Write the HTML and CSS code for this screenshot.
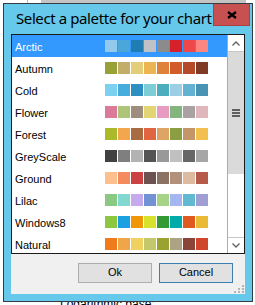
FILE: index.html
```html
<!DOCTYPE html>
<html lang="en">
<head>
  <meta charset="UTF-8">
  <title>Select a palette</title>
  <link rel="stylesheet" href="styles.css">
</head>
<body>
  <div class="desk">
    <!-- Dialog window -->
    <div class="window">
      <div class="titlebar">
        <span class="title">Select a palette for your chart</span>
        <button class="close" aria-label="Close">
          <svg width="10" height="8" viewBox="0 0 10 8"><path d="M1 1 L9 7 M9 1 L1 7" stroke="#000" stroke-width="2.2" fill="none"/></svg>
        </button>
      </div>

      <div class="client">
        <div class="listbox">
          <ul class="list">
            <li class="row selected"><span class="name">Arctic</span><span class="swatches"><i style="background:#94c9ee"></i><i style="background:#4ba7d9"></i><i style="background:#1f7db4"></i><i style="background:#c0c1c6"></i><i style="background:#8b8b8b"></i><i style="background:#d6202a"></i><i style="background:#f0474b"></i><i style="background:#fd8680"></i></span></li>
            <li class="row"><span class="name">Autumn</span><span class="swatches"><i style="background:#98a136"></i><i style="background:#c2ae6a"></i><i style="background:#e4cd78"></i><i style="background:#edb452"></i><i style="background:#df8138"></i><i style="background:#d45c2a"></i><i style="background:#b54a28"></i><i style="background:#7f3b25"></i></span></li>
            <li class="row"><span class="name">Cold</span><span class="swatches"><i style="background:#7dd1f0"></i><i style="background:#47addd"></i><i style="background:#2d8fc2"></i><i style="background:#7dcdd6"></i><i style="background:#4badbd"></i><i style="background:#9ccfe6"></i><i style="background:#63b2d4"></i><i style="background:#4994b4"></i></span></li>
            <li class="row"><span class="name">Flower</span><span class="swatches"><i style="background:#dc7a9a"></i><i style="background:#adc479"></i><i style="background:#a08e7c"></i><i style="background:#e2d574"></i><i style="background:#e79bc1"></i><i style="background:#85b57e"></i><i style="background:#aaa2a2"></i><i style="background:#e0b6bd"></i></span></li>
            <li class="row"><span class="name">Forest</span><span class="swatches"><i style="background:#abba2a"></i><i style="background:#f2a64e"></i><i style="background:#a96b42"></i><i style="background:#e06642"></i><i style="background:#dea466"></i><i style="background:#8b9f42"></i><i style="background:#c29668"></i><i style="background:#f1c04f"></i></span></li>
            <li class="row"><span class="name">GreyScale</span><span class="swatches"><i style="background:#414141"></i><i style="background:#7f7f7f"></i><i style="background:#b3b3b3"></i><i style="background:#545454"></i><i style="background:#999999"></i><i style="background:#c0c0c0"></i><i style="background:#666666"></i><i style="background:#a6a6a6"></i></span></li>
            <li class="row"><span class="name">Ground</span><span class="swatches"><i style="background:#fdbf8c"></i><i style="background:#f48b5e"></i><i style="background:#cc4242"></i><i style="background:#6c5250"></i><i style="background:#8c7262"></i><i style="background:#b2917a"></i><i style="background:#dcbba0"></i><i style="background:#b65a4a"></i></span></li>
            <li class="row"><span class="name">Lilac</span><span class="swatches"><i style="background:#8ac982"></i><i style="background:#82d8d0"></i><i style="background:#c5abee"></i><i style="background:#7193d6"></i><i style="background:#a5d486"></i><i style="background:#a5b6f0"></i><i style="background:#62b9d2"></i><i style="background:#a09fd4"></i></span></li>
            <li class="row"><span class="name">Windows8</span><span class="swatches"><i style="background:#8dc63f"></i><i style="background:#1ba1e2"></i><i style="background:#f09609"></i><i style="background:#d8e12c"></i><i style="background:#339933"></i><i style="background:#00aba9"></i><i style="background:#e05a20"></i><i style="background:#e9bb35"></i></span></li>
            <li class="row"><span class="name">Natural</span><span class="swatches"><i style="background:#ef7b1a"></i><i style="background:#f0a54a"></i><i style="background:#eed161"></i><i style="background:#c4c86a"></i><i style="background:#9aa232"></i><i style="background:#aca384"></i><i style="background:#8a4538"></i><i style="background:#d0462c"></i></span></li>
          </ul>

          <!-- Vertical scrollbar -->
          <div class="scrollbar">
            <div class="sb-btn up">
              <svg width="16" height="16" viewBox="0 0 16 16"><path d="M4.5 10.5 L8 7 L11.5 10.5" stroke="#606060" stroke-width="1.3" fill="none"/></svg>
            </div>
            <div class="thumb"><span class="grip"></span></div>
            <div class="track"></div>
            <div class="sb-btn down">
              <svg width="16" height="15" viewBox="0 0 16 15"><path d="M4.5 5.5 L8 9 L11.5 5.5" stroke="#606060" stroke-width="1.3" fill="none"/></svg>
            </div>
          </div>
        </div>

        <div class="buttons">
          <button class="btn">Ok</button>
          <button class="btn default">Cancel</button>
        </div>

        <svg class="size-grip" width="10" height="8" viewBox="0 0 10 8">
          <rect x="8" y="0" width="2" height="2" fill="#b4b4b4"/>
          <rect x="4" y="3" width="2" height="2" fill="#b4b4b4"/>
          <rect x="8" y="3" width="2" height="2" fill="#b4b4b4"/>
          <rect x="0" y="6" width="2" height="2" fill="#b4b4b4"/>
          <rect x="4" y="6" width="2" height="2" fill="#b4b4b4"/>
          <rect x="8" y="6" width="2" height="2" fill="#b4b4b4"/>
        </svg>
      </div>
    </div>

    <!-- form underneath the dialog -->
    <div class="behind"><span>Logarithmic base:</span></div>
  </div>
</body>
</html>
```

FILE: styles.css
```css
body {
  margin: 0;
  font-family: "Liberation Sans", Arial, sans-serif;
}

.desk {
  width: 255px;
  height: 305px;
  overflow: hidden;
  box-sizing: border-box;
  padding: 3px 0 0 3px;
  background:
    linear-gradient(#c4c4c4, #c4c4c4) 41px 0 / 205px 3px no-repeat,
    linear-gradient(#bdbdbd, #bdbdbd) 27px 0 / 1px 3px no-repeat,
    #fff;
}

.window {
  width: 250px;
  height: 299px;
  box-sizing: border-box;
  border: 1px solid #323c42;
  background: #66c8ea;
  display: flex;
  flex-direction: column;
}

/* Title bar */
.titlebar {
  height: 30px;
  display: flex;
  justify-content: space-between;
  align-items: flex-start;
}

.title {
  padding: 4px 0 0 12px;
  font-family: "Noto Sans", "Open Sans", sans-serif;
  font-size: 15px;
  letter-spacing: -0.4px;
  line-height: 20px;
  white-space: nowrap;
  color: #000;
}

.close {
  width: 37px;
  height: 22px;
  margin-right: 2px;
  padding: 0;
  border: 1px solid #a8403f;
  border-top: 0;
  background: #c75050;
  display: flex;
  align-items: center;
  justify-content: center;
}

/* Client area */
.client {
  flex: 1;
  margin: 0 7px 7px;
  background: #f0f0f0;
  position: relative;
  display: flex;
  flex-direction: column;
}

.listbox {
  height: 220px;
  box-sizing: border-box;
  border: 1px solid #1b1b1b;
  background: #fff;
  display: flex;
}

.list {
  flex: 1;
  margin: 0;
  padding: 0;
  list-style: none;
  overflow: hidden;
}

.row {
  height: 22px;
  flex-shrink: 0;
  display: flex;
  align-items: center;
  padding-left: 3px;
  font-size: 11px;
  color: #000;
}

.row.selected {
  background: #3399ff;
  color: #fff;
}

.name {
  width: 90px;
  padding-top: 2px;
}

.swatches {
  display: flex;
  gap: 1px;
}

.swatches i {
  display: block;
  width: 12px;
  height: 12px;
}

/* Scrollbar */
.scrollbar {
  width: 16px;
  border-left: 1px solid #ababab;
  background: #fff;
  display: flex;
  flex-direction: column;
}

.sb-btn {
  background: #fff;
}

.sb-btn svg {
  display: block;
}

.sb-btn.up {
  height: 16px;
  border-bottom: 1px solid #c8c8c8;
}

.sb-btn.down {
  height: 15px;
  border-top: 1px solid #c8c8c8;
}

.thumb {
  height: 122px;
  background: #dadada;
  display: flex;
  align-items: center;
  justify-content: center;
}

.grip {
  width: 8px;
  height: 2px;
  background: #606060;
  box-shadow: 0 3px 0 #606060, 0 -3px 0 #606060;
}

.track {
  flex: 1;
}

/* Dialog buttons */
.buttons {
  display: flex;
  justify-content: flex-end;
  gap: 7px;
  padding: 9px 12px 0 0;
}

.btn {
  width: 74px;
  height: 20px;
  padding: 0 0 2px;
  border: 1px solid #adadad;
  background: #e1e1e1;
  font-family: "Liberation Sans", Arial, sans-serif;
  font-size: 11px;
  color: #000;
}

.btn.default {
  border-color: #3c7fb1;
}

.size-grip {
  position: absolute;
  right: 1px;
  bottom: 1px;
}

.behind {
  height: 3px;
  overflow: hidden;
  padding-left: 57px;
  font-size: 12px;
  line-height: 12px;
  color: #000;
}

.behind span {
  display: block;
  margin-top: -4px;
}
```
